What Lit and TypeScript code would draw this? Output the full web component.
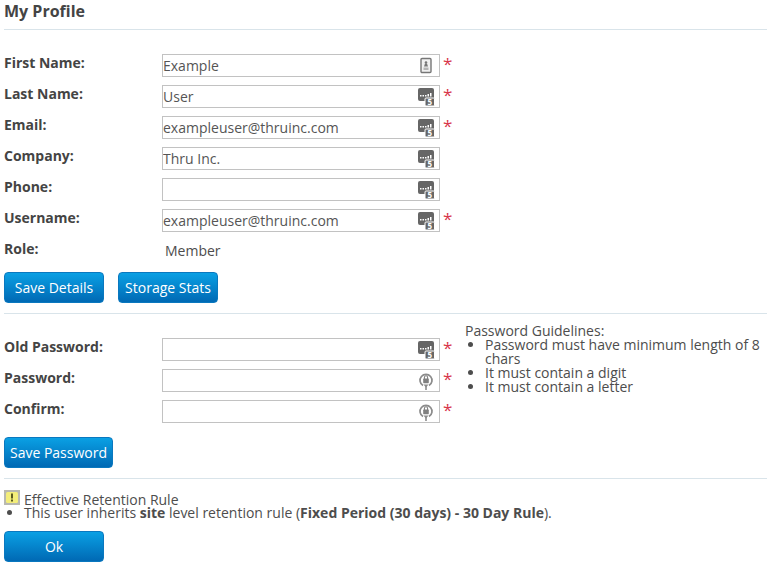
import { LitElement, html, css, svg } from "lit";
import { customElement } from "lit/decorators.js";

const dbIcon = svg`<svg class="icon" viewBox="0 0 18 18" width="18" height="18">
  <rect x="1" y="0" width="16" height="13" rx="2" fill="#666"></rect>
  <rect x="3" y="7" width="1.5" height="1.5" fill="#fff"></rect>
  <rect x="5.5" y="7" width="1.5" height="1.5" fill="#fff"></rect>
  <rect x="8" y="7" width="1.5" height="1.5" fill="#fff"></rect>
  <rect x="10.5" y="6" width="1.5" height="2.5" fill="#fff"></rect>
  <rect x="13" y="5" width="1.5" height="3.5" fill="#fff"></rect>
  <rect x="8" y="10" width="9.5" height="8" rx="1" fill="#666" stroke="#fff" stroke-width="1"></rect>
  <text x="12.8" y="17" font-size="8" font-weight="700" text-anchor="middle" fill="#fff" font-family="Open Sans, sans-serif">5</text>
</svg>`;

const cardIcon = svg`<svg class="icon" viewBox="0 0 18 18" width="18" height="18">
  <rect x="4" y="1.5" width="10" height="14" rx="1" fill="#f1f1f1" stroke="#777" stroke-width="1.4"></rect>
  <circle cx="9" cy="5.5" r="1.3" fill="#777"></circle>
  <path d="M7 9.5 L11 9.5 L10 6.5 L8 6.5 Z" fill="#777"></path>
  <rect x="6.5" y="10.5" width="5" height="2.5" fill="#b5b5b5"></rect>
</svg>`;

const lockIcon = svg`<svg class="icon" viewBox="0 0 18 18" width="18" height="18">
  <path d="M6 13.6 A6 6 0 1 1 12 13.6" fill="none" stroke="#8c8c8c" stroke-width="1.7"></path>
  <path d="M9 13 L9 18" stroke="#8c8c8c" stroke-width="1.6"></path>
  <path d="M6.5 12.5 L11.5 12.5 L9 15.5 Z" fill="#8c8c8c"></path>
  <rect x="6.2" y="6.6" width="5.6" height="4.6" rx="0.6" fill="#808080"></rect>
  <path d="M7.4 7 V5.4 a1.6 1.6 0 0 1 3.2 0 V7" fill="none" stroke="#808080" stroke-width="1.1"></path>
</svg>`;

interface Field {
  label: string;
  value?: string;
  icon: unknown;
  required?: boolean;
}

const profileFields: Field[] = [
  { label: "First Name:", value: "Example", icon: cardIcon, required: true },
  { label: "Last Name:", value: "User", icon: dbIcon, required: true },
  { label: "Email:", value: "exampleuser@thruinc.com", icon: dbIcon, required: true },
  { label: "Company:", value: "Thru Inc.", icon: dbIcon },
  { label: "Phone:", value: "", icon: dbIcon },
  { label: "Username:", value: "exampleuser@thruinc.com", icon: dbIcon, required: true },
];

const passwordFields: Field[] = [
  { label: "Old Password:", icon: dbIcon, required: true },
  { label: "Password:", icon: lockIcon, required: true },
  { label: "Confirm:", icon: lockIcon, required: true },
];

@customElement("app-root")
export class AppRoot extends LitElement {
  static styles = css`
    :host {
      display: block;
      height: 567px;
      overflow: hidden;
      padding-left: 4px;
      box-sizing: border-box;
      background: #fff;
      color: #4d4d4d;
      font-family: "Open Sans", sans-serif;
      font-size: 14px;
      line-height: 14px;
    }
    h1 {
      margin: 0;
      height: 29px;
      font-size: 16px;
      line-height: 22px;
      font-weight: 700;
      color: #444;
    }
    .rule {
      border-top: 1px solid #d9e4ea;
    }
    .profile {
      padding-top: 24px;
    }
    .row {
      display: flex;
      height: 31px;
    }
    .label {
      width: 158px;
      font-weight: 700;
      line-height: 17px;
      color: #444;
    }
    .control {
      position: relative;
      width: 278px;
      height: 23px;
    }
    input {
      display: block;
      width: 100%;
      height: 23px;
      box-sizing: border-box;
      margin: 0;
      padding: 0;
      border: 1px solid #c2c2c2;
      background: #fff;
      color: #555;
      font: 14px "Open Sans", sans-serif;
      outline: none;
    }
    .icon {
      position: absolute;
      top: 3px;
      right: 5px;
    }
    .star {
      margin-left: 3px;
      color: #d8364a;
      font-size: 17px;
      line-height: 19px;
    }
    .role {
      display: flex;
      height: 32px;
      padding-top: 2px;
      box-sizing: border-box;
    }
    .role .label {
      line-height: 14px;
    }
    .role span {
      padding-left: 3px;
      line-height: 17px;
    }
    .actions {
      display: flex;
      gap: 14px;
      margin-bottom: 10px;
    }
    button {
      height: 31px;
      width: 100px;
      padding: 0;
      border: 1px solid #0a78bf;
      border-radius: 4px;
      background: linear-gradient(#0aa0e4, #0069b4);
      color: #fff;
      font: 14px "Open Sans", sans-serif;
    }
    button.wide {
      width: 109px;
    }
    .password {
      display: flex;
      margin-bottom: 10px;
    }
    .password-form {
      flex: none;
      width: 461px;
      padding-top: 24px;
    }
    .password-form .actions {
      margin: 6px 0 0;
    }
    .guidelines {
      padding-top: 10px;
    }
    ul {
      margin: 0;
      padding-left: 20px;
    }
    .retention {
      padding-top: 10px;
    }
    .retention-title {
      display: flex;
      align-items: flex-end;
      gap: 4px;
      height: 16px;
    }
    .retention-title span {
      line-height: 14px;
      margin-bottom: -2px;
    }
    .warn {
      display: block;
      width: 16px;
      height: 15px;
      flex: none;
    }
    .retention ul {
      margin-top: 1px;
    }
    .ok {
      margin-top: 11px;
    }
  `;

  private renderField(f: Field) {
    return html`
      <div class="row">
        <div class="label">${f.label}</div>
        <div class="control">
          <input type="text" .value=${f.value ?? ""} />
          ${f.icon}
        </div>
        ${f.required ? html`<span class="star">*</span>` : ""}
      </div>
    `;
  }

  render() {
    return html`
      <h1>My Profile</h1>
      <div class="rule"></div>
      <div class="profile">
        ${profileFields.map((f) => this.renderField(f))}
        <div class="role">
          <div class="label">Role:</div>
          <span>Member</span>
        </div>
        <div class="actions">
          <button>Save Details</button>
          <button>Storage Stats</button>
        </div>
      </div>
      <div class="rule"></div>
      <div class="password">
        <div class="password-form">
          ${passwordFields.map((f) => this.renderField(f))}
          <div class="actions">
            <button class="wide">Save Password</button>
          </div>
        </div>
        <div class="guidelines">
          Password Guidelines:
          <ul>
            <li>Password must have minimum length of 8 chars</li>
            <li>It must contain a digit</li>
            <li>It must contain a letter</li>
          </ul>
        </div>
      </div>
      <div class="rule"></div>
      <div class="retention">
        <div class="retention-title">
          <svg class="warn" viewBox="0 0 16 15">
            <rect width="16" height="15" fill="#b9b9b0"></rect>
            <rect x="2" y="2" width="12" height="11" rx="1.5" fill="#f4ee7a"></rect>
            <rect x="7" y="3.5" width="2" height="5" fill="#5a5a20"></rect>
            <rect x="7" y="9.5" width="2" height="2" fill="#5a5a20"></rect>
          </svg>
          <span>Effective Retention Rule</span>
        </div>
        <ul>
          <li>
            This user inherits <b>site</b> level retention rule
            (<b>Fixed Period (30 days) - 30 Day Rule</b>).
          </li>
        </ul>
        <button class="ok">Ok</button>
      </div>
    `;
  }
}
